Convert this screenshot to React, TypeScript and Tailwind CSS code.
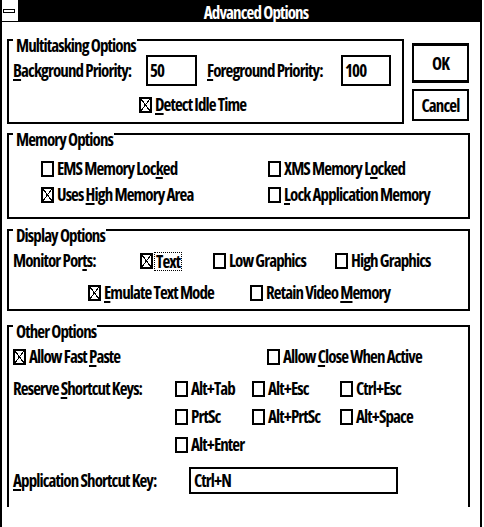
import React from 'react'

const U: React.FC<{ children: React.ReactNode }> = ({ children }) => (
  <span className="underline decoration-2 underline-offset-[2px]">{children}</span>
)

const Check: React.FC<{ checked?: boolean }> = ({ checked }) => (
  <span className="w-[13px] h-[16px] border-2 border-black shrink-0 flex">
    {checked && (
      <svg width="9" height="12" viewBox="0 0 9 12" shapeRendering="crispEdges">
        <path d="M0 0 L9 12 M9 0 L0 12" stroke="black" strokeWidth="1" fill="none" />
      </svg>
    )}
  </span>
)

const Option: React.FC<{ checked?: boolean; className?: string; children: React.ReactNode }> = ({
  checked,
  className,
  children
}) => (
  <div className={`flex items-center h-[17px] ${className ?? ''}`}>
    <Check checked={checked} />
    <span className="ml-[3px] whitespace-nowrap">{children}</span>
  </div>
)

const Legend: React.FC<{ children: React.ReactNode }> = ({ children }) => (
  <legend className="h-[6px] pl-[3px] pr-[1px] leading-[17px] whitespace-nowrap">{children}</legend>
)

export default function App() {
  return (
    <div className="w-[484px] h-[527px] bg-white">
      <div className="w-[482px] h-[527px] border-x-2 border-black flex flex-col text-black font-bold text-[17px] leading-[17px] tracking-[-0.9px] font-stretch-75% font-['Open_Sans','Liberation_Sans',Arial,sans-serif]">
        {/* title bar */}
        <div className="flex h-[22px] bg-black shrink-0">
          <div className="w-[16px] h-[21px] bg-white flex items-center pl-[1px]">
            <div className="w-[12px] h-[4px] border border-black" />
          </div>
          <div className="flex-1 text-center text-white pt-[4px] pl-[14px]">Advanced Options</div>
        </div>

        <div className="pl-[5px] pr-[10px] pt-[15px]">
          {/* multitasking + buttons */}
          <div className="flex items-start">
            <fieldset className="w-[397px] border-2 border-black px-[4px] pt-[12px] pb-[9px] min-w-0">
              <Legend>Multitasking Options</Legend>
              <div className="flex items-center h-[31px]">
                <span className="w-[133px] whitespace-nowrap">
                  <U>B</U>ackground Priority:
                </span>
                <input
                  readOnly
                  defaultValue="50"
                  className="w-[51px] h-[31px] border-2 border-black pl-[2px] outline-none"
                />
                <span className="ml-[10px] w-[134px] whitespace-nowrap">
                  <U>F</U>oreground Priority:
                </span>
                <input
                  readOnly
                  defaultValue="100"
                  className="w-[50px] h-[31px] border-2 border-black pl-[2px] outline-none"
                />
              </div>
              <Option checked className="mt-[10px] pl-[126px]">
                <U>D</U>etect Idle Time
              </Option>
            </fieldset>

            <div className="ml-[8px] w-[57px] flex flex-col">
              <button className="mt-[6px] h-[40px] border-x-2 border-y-[3px] border-black">OK</button>
              <button className="mt-[6px] h-[32px] border-2 border-black">Cancel</button>
            </div>
          </div>

          {/* memory */}
          <fieldset className="mt-[7px] border-2 border-black px-[4px] pt-[23px] pb-[14px] min-w-0">
            <Legend>Memory Options</Legend>
            <div className="flex pl-[28px]">
              <Option className="w-[227px]">
                EMS Memory Loc<U>k</U>ed
              </Option>
              <Option>
                XMS Memory L<U>o</U>cked
              </Option>
            </div>
            <div className="flex pl-[28px] mt-[9px]">
              <Option checked className="w-[227px]">
                Uses <U>H</U>igh Memory Area
              </Option>
              <Option>
                <U>L</U>ock Application Memory
              </Option>
            </div>
          </fieldset>

          {/* display */}
          <fieldset className="mt-[8px] border-2 border-black px-[4px] pt-[19px] pb-[8px] min-w-0">
            <Legend>Display Options</Legend>
            <div className="flex items-center h-[17px]">
              <span className="w-[127px] whitespace-nowrap">
                Monitor Por<U>t</U>s:
              </span>
              <div className="w-[73px] flex items-center">
                <Check checked />
                <span className="ml-[1px] px-[1px] h-[19px] mt-[2px] border border-dotted border-black leading-[17px]">
                  Text
                </span>
              </div>
              <Option className="w-[122px]">Low Graphics</Option>
              <Option>High Graphics</Option>
            </div>
            <div className="flex pl-[75px] mt-[15px]">
              <Option checked className="w-[162px]">
                <U>E</U>mulate Text Mode
              </Option>
              <Option>
                Retain Video <U>M</U>emory
              </Option>
            </div>
          </fieldset>

          {/* other */}
          <fieldset className="mt-[12px] border-2 border-b-0 border-black px-[4px] pt-[19px] pb-[13px] min-w-0">
            <Legend>Other Options</Legend>
            <div className="flex">
              <Option checked className="w-[254px]">
                Allow Fast <U>P</U>aste
              </Option>
              <Option>
                Allow <U>C</U>lose When Active
              </Option>
            </div>
            <div className="flex items-center h-[17px] mt-[15px]">
              <span className="w-[162px] whitespace-nowrap">
                Reserve <U>S</U>hortcut Keys:
              </span>
              <Option className="w-[77px]">Alt+Tab</Option>
              <Option className="w-[88px]">Alt+Esc</Option>
              <Option>Ctrl+Esc</Option>
            </div>
            <div className="flex pl-[162px] mt-[11px]">
              <Option className="w-[77px]">PrtSc</Option>
              <Option className="w-[88px]">Alt+PrtSc</Option>
              <Option>Alt+Space</Option>
            </div>
            <div className="flex pl-[162px] mt-[11px]">
              <Option>Alt+Enter</Option>
            </div>
            <div className="flex items-center mt-[14px]">
              <span className="w-[176px] whitespace-nowrap">
                <U>A</U>pplication Shortcut Key:
              </span>
              <input
                readOnly
                defaultValue="Ctrl+N"
                className="w-[209px] h-[27px] border-2 border-black pl-[3px] outline-none"
              />
            </div>
          </fieldset>
        </div>
      </div>
    </div>
  )
}
